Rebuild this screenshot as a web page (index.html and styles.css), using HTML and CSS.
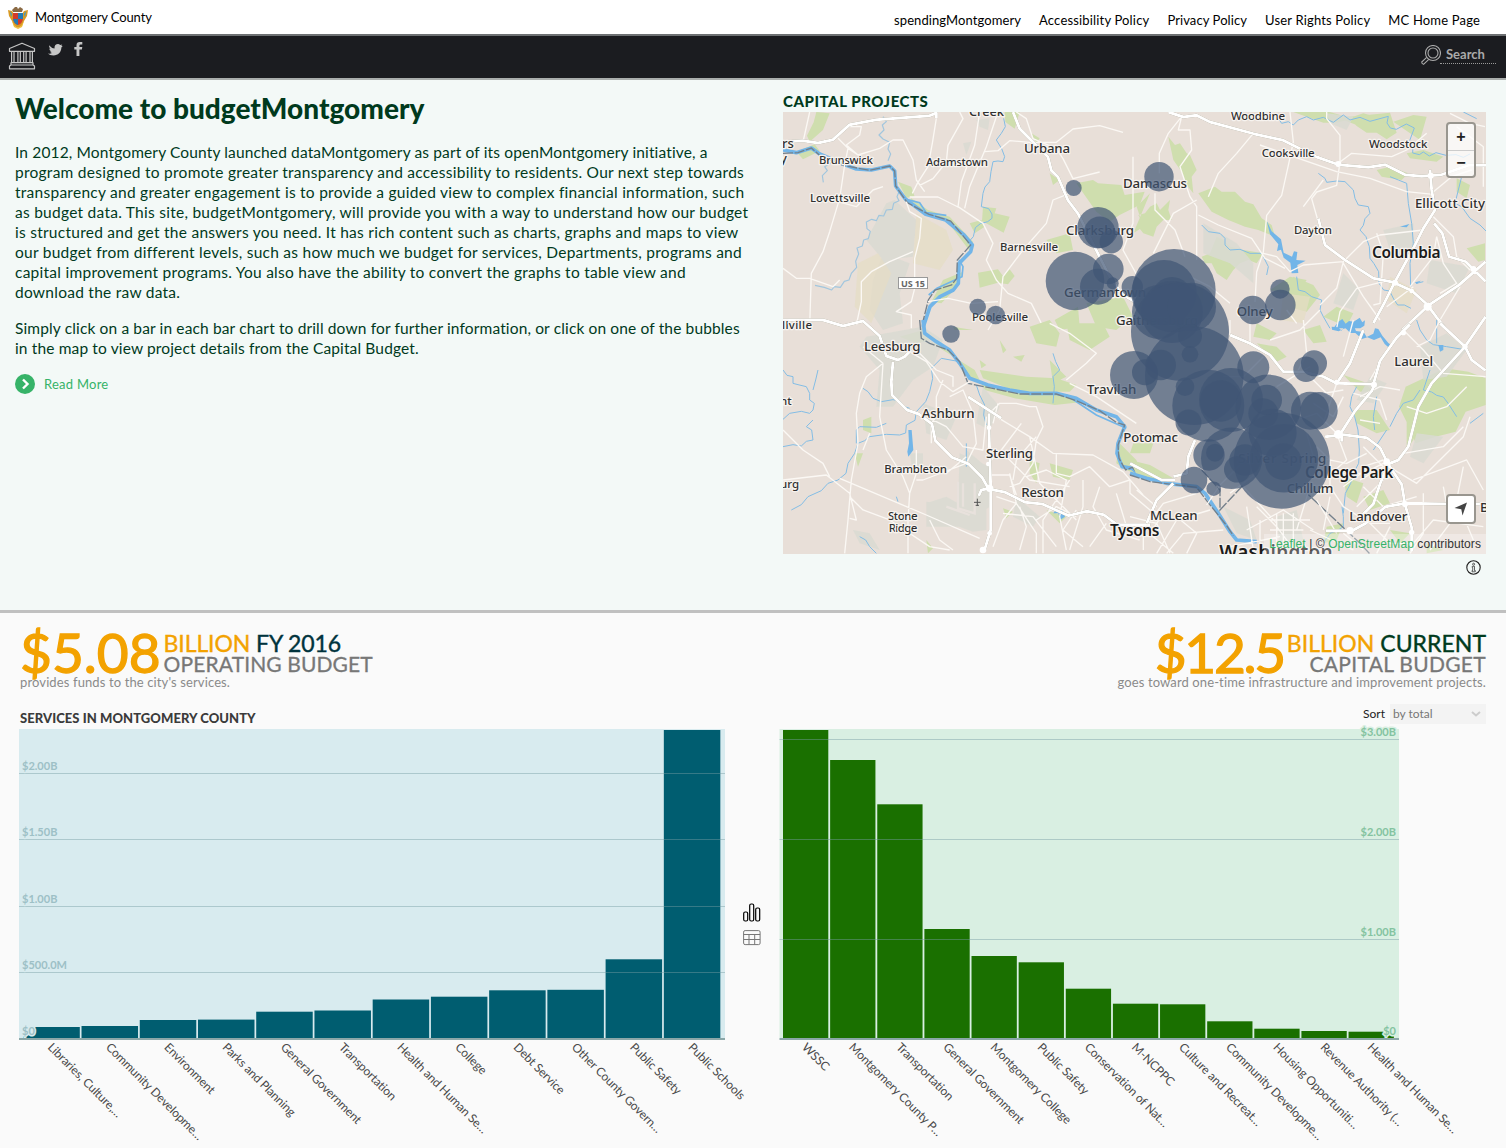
FILE: index.html
```html
<!DOCTYPE html>
<html lang="en">
<head>
<meta charset="utf-8">
<title>budgetMontgomery</title>
<link rel="stylesheet" href="styles.css">
</head>
<body>
<header class="topbar">
  <a class="brand">
    <svg class="crest" width="20" height="22" viewBox="0 0 20 22"><path d="M4 3L7 0h2l1 2 2-2 3 2-1 3H5z" fill="#8b6b45"/><path d="M0 3l4 1 2 3h8l2-3 4-1-1 6-3 5-2 5-4 2-4-2-2-5-3-5z" fill="#d99a24"/><path d="M2 4l2 3-1 3zM18 4l-2 3 1 3z" fill="#2f9ad4"/><path d="M5 6h10v6q-1 5-5 6-4-1-5-6z" fill="#d33b2c"/><path d="M10 6h5v6h-5zM5 12h5v6q-4-1-5-6z" fill="#237bb5"/><path d="M4 14l3 5 3 2 3-2 3-5-2 6-4 2-4-2z" fill="#f0bd38"/></svg>
    <span>Montgomery County</span>
  </a>
  <nav class="links"><a class="tight">spendingMontgomery</a><a>Accessibility Policy</a><a class="tight">Privacy Policy</a><a>User Rights Policy</a><a>MC Home Page</a></nav>
</header>
<div class="navbar">
  <div class="social">
    <svg class="hall" width="28" height="28" viewBox="0 0 28 28" fill="none" stroke="#c6c6c6" stroke-width="1.200" stroke-linejoin="round"><path d="M1.500 6.500L14 1.200l12.500 5.300v2.800h-25zM3.600 9.300v11.400M6 9.300v11.400M9.900 9.300v11.400M12.300 9.300v11.400M15.700 9.300v11.400M18.100 9.300v11.400M22 9.300v11.400M24.400 9.300v11.400M3 20.700h22v2.300H3zM3 23L1.500 24v2.800h25V24L25 23"/></svg>
    <svg class="bird" width="15" height="12" viewBox="0 0 15 12"><path d="M1 1.200Q3.500 4.200 6.500 4.400C6.200 1.500 8 0 10 0q1.300 0 2.100.9L14.200.6l-.9 1.200 1.400.1-1.300 1.700C13.200 8.500 10 11.500 5.500 11.500 3.100 11.500 1 10.800 0 9.500q2.300.5 4-.6Q2.700 8.700 2 7.400h1.400Q1.300 6.500 1.200 4.400l1.300.4Q.9 3.200 1 1.200z" fill="#c6c6c6"/></svg>
    <svg class="fb" width="9" height="14" viewBox="0 0 9 14"><path d="M2.500 14V7.600H.3V5h2.200V3.300Q2.500 0 5.700 0h2.600v2.500H6.600Q5.400 2.500 5.400 3.600V5h2.900l-.4 2.600H5.400V14z" fill="#c6c6c6"/></svg>
  </div>
  <div class="search">
    <svg width="20" height="20" viewBox="0 0 20 20" fill="none" stroke="#aaa" stroke-width="1.100"><circle cx="12" cy="8" r="7.500"/><circle cx="12" cy="8" r="5"/><path d="M5.700 12.300L.7 17q0 1.800 1.800 2.300L7.800 14.300"/></svg>
    <span>Search</span>
  </div>
</div>

<section class="hero">
  <div class="intro">
    <h1>Welcome to budgetMontgomery</h1>
    <p><span class="lead">In 2012, Montgomery County launched dataMontgomery as part of its openMontgomery initiative, a</span><br>program designed to promote greater transparency and accessibility to residents. Our next step towards<br>transparency and greater engagement is to provide a guided view to complex financial information, such<br>as budget data. This site, budgetMontgomery, will provide you with a way to understand how our budget<br>is structured and get the answers you need. It has rich content such as charts, graphs and maps to view<br>our budget from different levels, such as how much we budget for services, Departments, programs and<br>capital improvement programs. You also have the ability to convert the graphs to table view and<br>download the raw data.</p>
    <p class="lead">Simply click on a bar in each bar chart to drill down for further information, or click on one of the bubbles<br>in the map to view project details from the Capital Budget.</p>
    <a class="more"><svg width="20" height="20" viewBox="0 0 20 20"><circle cx="10" cy="10" r="10" fill="#36b368"/><path d="M8 5.500l4.500 4.500L8 14.500" fill="none" stroke="#fff" stroke-width="2.400"/></svg><span>Read More</span></a>
  </div>
  <div class="projects">
    <h2>CAPITAL PROJECTS</h2>
    <div class="map">
      <svg width="703" height="442" viewBox="0 0 703 442">
        <rect width="703" height="442" fill="#e8dfd8"/>
        <!-- north-west tile -->
        <g transform="translate(0 -22) scale(.33333)">
          <g class="park">
            <path d="M100 66l40 4-20 50-40 35-8-18 20-40zM40 185l55-22 15 20-50 25zM345 275l40 15 10 30-25 3zM385 325l50 35 65 20 70 75-8 30-65-85-60-30-60-30zM600 350l40 5-5 15 45 10-18 48-65-35zM560 400l35-10 10 20-30 20zM665 66l45 0-15 50-28-20zM800 250l30 20-20 15zM880 280l50-10 15 10 70 5 10 30 60-10-15 40-60 30-30 20-40-30zM790 450l70-20 10 50-50 10zM585 548l60-10 15 20 20-20 15 20-20 25-30-5-55 15zM480 570l60-25-20 50-45 45-30-5zM910 640l110-20 30 60-50 40-60-10zM815 690l70-40 5 60-60 10zM745 130l25 15-10 15zM510 710l60 10h-55z"/>
          </g>
          <g class="scrub"><path d="M580 90l40-5-5 35-25-10zM310 340l25-10 65 60-10 110-90 10-50-60zM300 490l80 30-30 90 10 90-60 20-40-60 10-90zM540 160l25-5-15 40z"/></g>
          <g class="farm"><path d="M400 370l90 50 20 60-40 60-80-20zM225 520l60-30 40 60-60 150-50-50z"/></g>
          <g class="stream"><path d="M300 80l10 15-12 10 5 15-15 15 12 12 20 10-5 20 8 15-8 20M150 215l-25 15 8 12-15 15 3 20M350 300l-8 20 6 12-16 8-4 18-18 2-8 18-14-2-8 16-14-4-16 8 2 20 10 8-6 22-14 4-4 18-16 6 5 18-9 22 3 18-16 18-7 20-14 4-12 18-18-2-8 10-22-8-28-6"/></g>
          <g class="brook"><path d="M662 85l5 25-12 20-15 20 16 26 9 24-5 15-15-2-15 2-6 30-4 30-14 16-6 19-5 40 22 6 10 16 0 13-13 10-22 6-15 12-6 27-18 20"/></g>
          <path class="river" d="M0 180l40 8 45-14 25 18 70 30 40 15 45 3 55-12 15 15 3 45 30 40 60 45 60 17 55 45 25 30-5 20-35 35-2 60-15 20-40 20-30 30-20 60 5 45"/>
          <path class="river2" d="M370 328l40 10 20 30 60 8M528 510l12 20-3 30-75 35-25 20"/>
          <path class="border" d="M0 190l45-2 40-14 25 22 70 30 80 15 60-13 15 15 3 45 35 50 65 35 65 20 60 72-40 45-2 55-15 20-50 15-20 30-15 60-8 45"/>
          <g class="minor"><path d="M80 66l-20 90M200 110l35 0-5 25-40 30 35 30 65-20 40-25 30 0 30 60 10 60 25 35M165 145l30 30-10 50-15 100-30 100-20 60-35 65-5 160M0 535l40 30 40 0 70 25 20-20M225 195l-30-20M460 85l-12 75-13 70-32 50-15 30M530 66l10 20-45 80-5 50-40 50-40 20M590 66l-15 100-40 110-10 75-60-30h-85M640 80l-30 90-50 120-15 65M525 350l75 50 30 60-20 50 30 60 35 40 70 30 30 60M370 335l10 30 35 20-5 60-15 60 0 90-10 40-45 30 45 10 0 40M300 290l-30 10-50 50-55-15M390 485l-70 30-55 30-30 30 0 60-15 70M605 185l40-3 35-30 60 5 80 0 50-40 80-10 70 20M700 66l30 20 20 60 70 30 20 30 30 60 80-20M860 310l-50 20-20 70-70 80-60 80-10 100-35 60M435 635l60-10 70 15 80-5M1050 200l0 200-30 80 50 90"/></g>
          <g class="major"><path d="M0 155l60-3 45 7 45-10 50-45 80-15 160-12 20-8 0 15"/><path d="M690 66l20 50 50 50 35 35 10 40 20 20 30 70 30 40 30 60 60 120 40 60 50 30"/></g>
        </g>
        <!-- north-east tile -->
        <g transform="translate(347 -22) scale(.33333)">
          <g class="park">
            <path d="M115 140l20 25 15-5 20 30 10 5 20 45-15 20 5 50-20-25-15-40-25-35zM205 310l50-20 20 15 40 0 30 30 25 8 25 42 30 20 10 35-50-20-40-10-50-20-50-25zM490 66h110l50 15 130-13 20 60-30 20-30-20-30 0-30-20-20-20-40 10-40 0zM790 95l60-20 40 5-20 70zM640 90l60-20 70 20 10 50-60-20zM740 240l40-10 55 20-20 20-60-10zM830 190l50-10 60 20-20 15-80-10zM60 310l-40 40 20 60-30 20M260 440l20 10 20 20 40 10 60 10-20 30-25-10-25 10-20 20-20 30-30-20-15-30-20 0-10-20 25-10zM490 560l60 25 20 30-40 50-40-10zM980 265l40 20-10 40-30-20zM1010 475l55-15v50l-20 5zM150 600l70-10 0 50-80 20zM420 600l60-40 50 10-30 50zM580 680l40-30 50 20-20 40zM60 350l20-10 10 20 30-30-5 30 10 30-25 0-20 20-10 30-30-10-20-25 15-10-10-20 20-5z"/>
          </g>
          <g class="scrub"><path d="M220 400l100 60 50 60 0 60-70-60-80-30zM640 550l50 50-20 60-60-20zM760 420l90-20 0 100-60 10zM900 510l120 20-40 80-90-30zM590 70l80 10-20 40-50-20z"/></g>
          <g class="farm"><path d="M460 610l80 10-20 80-70-10zM780 560l80 40-30 70-60-40z"/></g>
          <g class="brook"><path d="M215 405l20 20 35 5 15 15 0 20 15 15 30-2 30 12 35 0 10 20 10 20-5 25M500 560l5 40 20 5 20 15 30 10-5 30 10 20 20 35M445 85l10 15 20-5 15 10 15-15 25-10 20 10 30-8 30 15 30-22 20 15 30-8 30 12 55-15-4 20 10 15 18 4 30-16 24 12-14 38 10 15-1 22 20 5 12-8 18 12 20-10 30 8 30-2 22 8 20-10M565 250l20 15 5 12 30-4 25 2 25 25 5 25 10 20 30 5 5 20-15 16-5 20-10 14 18 20 10 30 2 35 12 16 14 24 1 35 14 20 18 3 12 24 12 18 20 0 20 10M780 260l25 10 25 10 5 60 10 60 5 60-10 60 2 70M995 260l-10 40-10 40 20 10 25 35 30 20 20 20M860 580l20-5M1000 66l40 20"/></g>
          <path class="lake" d="M410 392l15 32 28 24 8 40 25 12 6-16 10 2-3 24 28 2-25 13 3 24-20 1-4-32-20-15-8-24-12 4 4-20-25-30zM610 715l15-20 12-8 10 14 10-8 14 2 18-12 8 14 8-6-2 16-12 8zM810 410l28-8-8 10zM855 577l18-5-13 10z"/>
          <g class="minor"><path d="M155 80l-40 50-27 60 0 60M155 80l-10 40 35 0 5 60-35 50 30 90 20 30 0 40 0 120M370 130l-50 60-55 60-30 70M480 66l10 90-15 70-20 90-45 60-10 110-20 60-5 90M590 66l0 20 40 50 0 80-10 70-60 20-15 20 20 70M625 220l40-30 120 10 45-20 60-50M390 165l230 80 100 20 110 40 80 8M905 310l60-50 60-20M910 380l60 60 10 60 40 40M880 420l-130 15-50 20-60 60-20 80-50 50M400 490l40 10 40 45 40-20 120-10M205 375l60 30 100 40 40 60 60 30M75 310l0 50 60 60 30 80M740 430l20 60-10 150-20 5M840 590l70-90 10-60M920 440l20 80 40 60-50 30M760 575l-80 20-50 70-10 50M640 520l60 100 50 70M990 590l-60 100M1060 290l0-120-80-60M960 70l60 30 45 10M300 640l-60-50-60-30M520 350l60-80M850 590l-80 60M500 700l-30-40M200 330l-70 40-60 120"/></g>
          <g class="major"><path d="M115 66l45 15 40-5 40 20 130 35 90 20 100 50 65 23 90 8 50-8 60 30 50 5 60-5 80-28h55M900 240l5 60 10 60-35 55-30 60-55 100-30 60-35 65M565 385l20 80 60 45 85 55 60 12 55 25 45 40 30 40 30 38M1067 515l-80 70-90 60-80 75M1067 575l-60-60-50-15-20-70-25-30"/></g>
          <g class="joint"><circle cx="625" cy="222" r="9"/><circle cx="902" cy="257" r="9"/><circle cx="795" cy="578" r="9"/><circle cx="893" cy="650" r="12"/><circle cx="845" cy="603" r="7"/><circle cx="1030" cy="537" r="9"/></g>
        </g>
        <!-- south-west tile -->
        <g transform="translate(0 208) scale(.33333)">
          <g class="park">
            <path d="M440 65l60 20 45 80 80 40 100 15 120 5 60 20-90 10-120-20-90-25-30-60zM590 150l140 20 90 5 60 20-20 20-160 0-100-40zM690 110l35-5-10 20zM650 60l20 30-10 10zM740 20l60-20 30 40-10 40-60-10zM850 10l110 0 20 40-60 40-60-30zM240 300l25-10 0 50-25-10zM215 400l25 0-15 40zM1010 370l50 50 20 50-50-20-30-20 5-40zM740 420l30 10-10 60-20-30zM660 565l30 10-20 20zM800 430l70 20-10 30-50-10zM790 570l60 20-20 20zM800 120l50 50-40 20zM350 50l70-20 20 30-40 10zM590 120l20 15-15 10zM430 660l20 25-15 15z"/>
          </g>
          <g class="scrub"><path d="M420 20l60 40-30 80-60 40-60 80-50 0 10-110-60-70 20-30zM530 400l90 40 0 120-80 60-110 0 0-70 60-20 35 20zM550 390l60 50 0 190-40 5-140-50 0-40 90 10zM420 250l100 40-30 70-60-20zM600 200l50 60-30 70-40-20zM210 630l50 10 30 50-60-20zM380 400l40 0 0 60-30 0zM700 530l70 60-20 30-60-30z"/></g>
          <g class="brook"><path d="M530 125l-55-10-30 30 4 30-9 40-12 30-28 30-4 26-26 14-2 24-18 6-40-2-50 7-15 12-20 8-10 30-20 30-6 30-24 20-30 10-20 22-40 18-20 24-30 16M240 205l15 10 15 20 25 10 35-6 20 4 12 16 18 6M0 150l12 16 18 4 0 20 15 4 25 6 10 20 0 20 14 10-4 20-10 10-25-6-35 6-20 18M90 300l-20 20 16 10 4 30-20 4-15 14-25-4-30 6M580 195l10 30 15 30-3 30 8 30M550 370l0 70M810 250l4-50-4-30 20-20-12-25-8-25M90 210l8-30 7-30M310 310l-30 12-50-2-10 10 0 40M230 650l18 10 12 20 20 20M340 530l5 15"/></g>
          <path class="lake" d="M376 330l10 0 5 60-15 20-3-15 5-25zM818 570l20 0 8 20-15 10-5-20-15 0z"/>
          <path class="river" d="M420 0l5 40 35 25 40 25 30 40 30 45 55 20 65 15 60 10h80l60 15 60 35 60 20 25 30-20 50-3 30 15 40 30 5 35 30"/>
          <path class="river2" d="M850 225l90 60 90 40"/>
          <path class="border" d="M410 0l5 55 25 15 55 20 35 35 25 65 155 32h110l60 20 70 30 50 35 25 8-20 60 3 40 20 35 20-8 25 30"/>
          <g class="minor"><path d="M300 130l-50 40-20 50-10 60 5 90-20 110-10 120-10 100M300 130l-10 160 20 100 50 80 20 50-5 80 0 100M0 480l130-15 70 55 20 80-20-5M170 475l260 110 160 70M200 530l40 40 80 30 120 80 60 10M0 330l60 60 60 40 20 40M380 95l50 30 40 60 40 30 50-30M400 90l60 60 50 20 0 30M480 180l-20 50 0 60-15 20 0 60M430 290l60 30 50 60 60 10 10-100M500 230l40-20 30 70 10 90-30 60-130 50-20 0M620 280l30-30 50 0 40 10 20 0 20 60-20 40-10 70-40 60-30 10M715 310l-60 80-40 40M760 350l-60 70-10 60M640 290l100 60 70 50 120 5 90 50 60 70M740 350l30 140 110 110M680 460l20 90-40 50-30 80M820 400l0 60 40 10 60-30 60 60 60-20M730 470l60-20 60 30-20 110 20 100M860 480l-80 120 0 100M640 530l60 20 60 90 0 60M660 580l90 10 70 90M900 480l0 80-40 130M950 500l-20 60 40 70 100 30M1000 520l40 130M620 465l60 0 20 60M400 390l0 70-20 60M550 410l-60 50-60 0M850 180l60-50 30-30-80-60-60-30M860 190l80 40 120 80M970 610l-50 70M710 560l20 60-20 70M880 570l-40 60 60 50M760 600l60-40 60 30M660 400l80 80 120 20M645 250l-15 60M240 390l20-50M240 80l60 50M440 600l30 60 40 30"/></g>
          <path class="runway" d="M525 485v80l50 15v-90M540 490v70M490 560l70 25"/>
          <g class="major"><path d="M0 0h120l60 18 60-15 50 45 20 60 35 12 20-10 20-20M330 125l-5 60 2 40 45 45 35 12 40 30 10 50 50 50 50 20 40 40 20 35 50 10 60 30 50 5 80 35 55-13 50 10 40 30h100M618 280v50l5 170 0 100 0 30-20 65M555 230l100 65M620 505l-25 5-8 18"/></g>
          <g class="joint"><circle cx="620" cy="505" r="11"/><circle cx="618" cy="323" r="7"/><circle cx="616" cy="432" r="7"/><circle cx="600" cy="690" r="10"/><circle cx="620" cy="640" r="7"/></g>
          <path d="M583 536v22M573 547h20M578 556h10" stroke="#555" stroke-width="3"/>
        </g>
        <!-- south-east tile -->
        <g transform="translate(347 208) scale(.33333)">
          <g class="park">
            <path d="M945 145l70 10 52 20v80l-60 20-30 60-60 15-60 20-20-50-30-60 20-60zM0 420l60 15 70 40-50 10-60-20zM380 70l60 10 30 30-30 15zM520 30l50-15 20 50-40 5zM640 165l60 20 30 30-40 0zM670 270l70 0 40 60-40 10-60-30zM700 530l60-20 20 40-60 20zM590 620l50-10-20 50-40 10zM380 10l60 30-20 20-50-10zM640 470l60 20-20 60-30-20zM830 280l30 20-10 60-20 30zM10 370l60 0-10 30-60 0zM780 630l60 10-30 30zM890 670l50 20-50 10z"/>
          </g>
          <g class="scrub"><path d="M720 170l50 20-40 60-50-10zM870 80l80-40 60 50-60 80-70 10zM440 590l60-20 20 90-70 20zM860 340l80 10-60 80-40-20zM280 560l80 40 20 60-60-20z"/></g>
          <g class="brook"><path d="M860 0l10 30 20 30 20 14 40 6 60 10M900 150l-10 30-10 30 25 6 15 10 20 5 15 20 25 39M870 210l-20 30-30 10-20 30-20 40M680 200l-15 30-5 30 14 30 10 40 4 60-2 40-16 30-8 30-16 30-6 60M770 330l-40 60M1060 280l-40 30M580 670l20-30 25-10 15-10 0-30-4-30M740 230l-10 60 4 40M920 0l0 70"/></g>
          <path class="lake" d="M605 20l20 2 10 10 15-22 20 3 8 20 23 3 9 15 20-10 5-16 10 2 12 20 18 22 8 5-5 10-14-12-12-20-20 8-20-8-16 5-20-18-15 0-15-15-20 10-20-5zM925 75l15 0 0 15-10 5z"/>
          <path class="river" d="M0 460l50 15 60 15 90 10 25 20 40 60 35 55 20 25 60 5"/>
          <path class="border" d="M0 465l60 20 140 17 30 40 60 75 20 30M215 450l55 60 0 60 70-75M520 510l170 160 30 32"/>
          <g class="minor"><path d="M0 480l0 40 60 50 40 10-40 60M300 45l0-45M210 10l-60 60M360 0v70M420 60l90-30 60-60M400 110l-60 60-60 0M500 160l30-60-10-100M440 200l100-60M600 230l-60-60M620 340l-60-60-60 20M690 230l60-30 60 10M700 380l60 60-70 40M620 340l30 80-70 60M530 340l20 70 100 20 60-30M640 460l60 0 60-30 100 60 60-60 80-80 20-60M830 260l60 20 60-20 60-60M850 480l160-60 50 90M600 500l40 60 80 50 60 0M700 500l60 60 100-30M720 610l60 60 70 0 60-70 150 20M780 620l-40 80M880 520l0 120-40 60M940 500l20 110-60 80M1000 440l-20 100 50 120M440 580v120M460 580v120M490 580v120M420 600h120M420 630h100M380 560l60 60 60 80M340 500l100 110M350 630l110-60 90 60M540 500l-40 130M560 540l60 100M200 520l-100 30-60 80 0 60M240 570l-100 30-60 100M280 630l-120 10-50 60M0 640l70 10 60 50M0 590l80 20 40 90M20 510l60 50M140 590l60 50-30 60M230 555l40-60 60-60M300 520l80-60M620 190l-40 120M640 110l30-110M670 220l80 20 20 60M690 300l60 10M850 0l-60 60-70 120M820 30l60 60 60 70 127 10M930 0l-30 60-40 20M640 210l-60 10M540 630l130 60M600 530l-20 100M700 440l60-20M550 250l60 40 30-60M560 380l40 40 0 80M640 500l80-60M680 560l80-80M350 560l20 130M390 600l0 100M300 680l150-30M640 640l60 50M820 400l120-20 60-60"/></g>
          <g class="major"><path d="M300 45l60 25 60 35 40 50 60 0 60 15 40 20 110 3 20-70 50-70 40-40M930 10l75 70 20 40 42 32M1067-10l-62 90-100 110-40 70-30 120-30 40-30 12-25 60-20 60-40 40M735 193l-10 20-50 60-45 70 80 10 40 30 25 50 40 60 10 60 20 70 0 70M585 350l50-5 0 20M1067 552h-110l-130-2-60 10-60 50-40 22h-80M130 490l-50 50-30 70M135 480l-40 0-95-50M130 470l40-10 5-50 20-50M700 30l-40 100-40 60"/></g>
          <g class="joint"><circle cx="625" cy="343" r="13"/><circle cx="770" cy="425" r="10"/><circle cx="825" cy="552" r="9"/><circle cx="660" cy="632" r="11"/><circle cx="1005" cy="80" r="8"/><circle cx="620" cy="187" r="8"/><circle cx="732" cy="194" r="9"/><circle cx="845" cy="637" r="8"/><circle cx="820" cy="38" r="8"/></g>
        </g>
        <g class="labels">
          <text x="-1" y="36" font-size="13">rs</text><text x="-3" y="51" font-size="13">y</text>
          <text x="186" y="4" textLength="35" font-size="13">Creek</text>
          <text x="36" y="51.500" textLength="54">Brunswick</text><text x="143" y="54" textLength="62">Adamstown</text>
          <text class="md" x="241" y="40.700" textLength="46">Urbana</text><text x="27" y="90" textLength="60">Lovettsville</text>
          <text x="217" y="138.700" textLength="58">Barnesville</text><text class="md" x="283" y="122.700" textLength="68">Clarksburg</text>
          <text class="md" x="281" y="184.700" textLength="82">Germantown</text><text x="189" y="209" textLength="56">Poolesville</text>
          <text class="md" x="333" y="213" textLength="82">Gaithersburg</text><text x="-1" y="217" textLength="30">llville</text>
          <text class="md" x="340" y="75.700" textLength="64">Damascus</text><text x="448" y="8" textLength="54">Woodbine</text>
          <text x="478.700" y="45.300" textLength="53">Cooksville</text><text x="586" y="35.700" textLength="58.500">Woodstock</text>
          <text class="md" x="632" y="96.300" textLength="70">Ellicott City</text><text x="511" y="122" textLength="38">Dayton</text>
          <text class="lg" x="589" y="145.500" textLength="68.500">Columbia</text><text class="md" x="453.700" y="203.700" textLength="36">Olney</text>
          <text class="md" x="81" y="239.300" textLength="56.500">Leesburg</text><text class="md" x="138.700" y="306.300" textLength="53">Ashburn</text>
          <text class="md" x="203" y="345.700" textLength="47">Sterling</text><text x="101.300" y="360.700" textLength="62.700">Brambleton</text>
          <text class="md" x="238.300" y="385.300" textLength="42.500">Reston</text><text x="105" y="408.300" textLength="29.700">Stone</text>
          <text x="105.700" y="419.700" textLength="28.700">Ridge</text><text x="-3" y="293.300">nt</text><text x="-3" y="375.700">urg</text>
          <text class="md" x="304" y="282.300" textLength="49.300">Travilah</text><text class="md" x="340.300" y="329.700" textLength="54.700">Potomac</text>
          <text class="lg" x="327" y="424" textLength="49.300">Tysons</text><text class="md" x="367" y="408" textLength="47.700">McLean</text>
          <text class="lg capital" x="436.300" y="447" textLength="113.300">Washington</text>
          <text class="md" x="455.300" y="351.300" textLength="88">Silver Spring</text><text class="lg" x="522" y="366" textLength="88.300">College Park</text>
          <text class="md" x="503.700" y="380.500" textLength="46.700">Chillum</text><text class="md" x="566.300" y="409" textLength="58">Landover</text>
          <text class="md" x="611.300" y="254" textLength="38.700">Laurel</text><text class="md" x="697" y="400">B</text>
        </g>
        <rect x="115.500" y="165.500" width="29" height="11" fill="#fff" stroke="#999"/><text x="118" y="174.500" font-size="9" font-weight="700" fill="#666" textLength="24">US 15</text>
        <g class="bubbles" id="bubbles"></g>
      </svg>
      <div class="zoom"><span>+</span><span>−</span></div>
      <div class="locate"><svg width="14" height="14" viewBox="0 0 14 14"><path d="M13 .5L8.500 13.500 7.300 7.200.5 6z" fill="#444"/></svg></div>
      <div class="credit"><a>Leaflet</a> | © <a>OpenStreetMap</a> contributors</div>
    </div>
    <svg class="info" width="15" height="15" viewBox="0 0 15 15" fill="none" stroke="#222"><circle cx="7.500" cy="7.500" r="6.700" stroke-width="1.100"/><circle cx="7.600" cy="4.200" r="1" stroke-width=".7"/><path d="M6.200 6.300h2.300v4.200h.8v1.300H6v-1.300h.7v-3h-.5z" stroke-width=".7"/></svg>
  </div>
</section>

<section class="budget">
  <div class="totals">
    <div class="total">
      <div class="figure"><b>$5.08</b><div class="unit"><div class="u1"><em>BILLION</em> <i class="teal">FY 2016</i></div><div class="u2">OPERATING BUDGET</div></div></div>
      <div class="note">provides funds to the city's services.</div>
    </div>
    <div class="total right">
      <div class="figure"><b>$12.5</b><div class="unit"><div class="u1"><em>BILLION</em> <i class="green">CURRENT</i></div><div class="u2">CAPITAL BUDGET</div></div></div>
      <div class="note">goes toward one-time infrastructure and improvement projects.</div>
    </div>
  </div>
  <div class="controls"><h3>SERVICES IN MONTGOMERY COUNTY</h3><div class="sort"><span>Sort</span><div class="select"><span>by total</span><svg width="10" height="6" viewBox="0 0 10 6"><path d="M1 1l4 3.500L9 1" fill="none" stroke="#ccc" stroke-width="2"/></svg></div></div></div>
  <div class="charts">
    <svg class="chart" id="operating" width="760" height="419"></svg>
    <div class="toggle">
      <svg width="18" height="19" viewBox="0 0 18 19" fill="none" stroke="#000" stroke-width="1.200"><rect x=".7" y="9" width="4" height="9" rx="1.500"/><rect x="6.700" y="1" width="4" height="17" rx="1.500"/><rect x="12.700" y="5" width="4" height="13" rx="1.500"/></svg>
      <svg width="18" height="16" viewBox="0 0 18 16" fill="none" stroke="#777"><rect x=".6" y=".6" width="16.500" height="14" rx="1.500"/><path d="M.6 4.500h16.500M.6 9.500h16.500M6 4.500v10M11.700 4.500v10"/></svg>
    </div>
    <svg class="chart" id="capital" width="727" height="419"></svg>
  </div>
</section>
<script src="app.js"></script>
</body>
</html>
```
FILE: styles.css
```css
* { box-sizing: border-box; }
body { margin: 0; width: 1506px; height: 1148px; overflow: hidden; font-family: Lato, "Open Sans", sans-serif; font-variant-ligatures: none; color: #003a1d; background: #fafafa; white-space: nowrap; }
h1, h2, h3, p { margin: 0; }
svg { display: block; flex: none; }
.topbar { height: 36px; border-bottom: 2px solid #6d7072; background: #fff; color: #000; display: flex; justify-content: space-between; padding: 7px 26px 0 8px; font-size: 13px; }
.brand { display: flex; gap: 7px; line-height: 20px; letter-spacing: -.12px; }
.links { display: flex; gap: 18px; line-height: 26px; letter-spacing: .17px; }
.tight { letter-spacing: .09px; }
.navbar { height: 44px; background: #1b1c20; border-bottom: 2px solid #aaaeac; display: flex; justify-content: space-between; padding: 6px 10px 0 8px; }
.social { display: flex; }
.bird { margin: 2px 0 0 12px; }
.fb { margin: 0 0 0 11px; }
.search { display: flex; padding-top: 3px; }
.search span { width: 56px; height: 19px; border-bottom: 1px dotted #999; margin-left: -1px; padding-left: 6px; color: #aaa; font-weight: 700; font-size: 13px; line-height: 19px; }
.hero { height: 533px; background: #f3f9f7; border-bottom: 3px solid #c0c0c0; display: flex; justify-content: space-between; padding: 12px 20px 0 15px; }
h1 { font-size: 28px; line-height: 32px; font-weight: 900; margin-bottom: 18px; }
p { font-size: 15.500px; line-height: 20px; margin-bottom: 16px; letter-spacing: .26px; }
.lead { letter-spacing: .14px; }
.more { display: flex; gap: 9px; font-size: 13px; line-height: 20px; letter-spacing: .25px; color: #36b368; margin-top: 15px; }
.projects { width: 703px; display: flex; flex-direction: column; }
h2 { font-size: 15px; line-height: 18px; padding-bottom: 2px; font-weight: 900; letter-spacing: .55px; }
.map { position: relative; width: 703px; height: 442px; overflow: hidden; }
.park { fill: #cfdeae; }
.scrub { fill: #d9dbd2; opacity: .85; }
.farm { fill: #e5ddc4; opacity: .7; }
.stream, .brook { fill: none; stroke: #83bde5; stroke-width: 3; stroke-linejoin: round; }
.stream { stroke: #a1c6de; stroke-width: 3.500; }
.river { fill: none; stroke: #72b5e8; stroke-width: 11; stroke-linejoin: round; }
.river2 { fill: none; stroke: #72b5e8; stroke-width: 5; }
.border { fill: none; stroke: #74808b; stroke-width: 4; stroke-dasharray: 30 5; }
.lake { fill: #72b5e8; }
.minor { fill: none; stroke: #fbf8f4; stroke-width: 4; stroke-linejoin: round; }
.runway { fill: none; stroke: #e8e1dc; stroke-width: 7; }
.major { fill: none; stroke: #fff; stroke-width: 9; stroke-linejoin: round; filter: drop-shadow(0 0 2px #8b8771); }
.joint { fill: #fff; }
.labels { font: 500 11.500px "Noto Sans", "Open Sans", sans-serif; fill: #303030; stroke: #f7f3ef; stroke-width: 2.500px; paint-order: stroke; stroke-linejoin: round; }
.labels .md { font-size: 13.300px; }
.labels .lg { font-size: 15.500px; font-weight: 600; fill: #1c1c1c; }
.labels .capital { font-size: 19px; }
.map text { font-family: "Noto Sans", "Open Sans", sans-serif; }
.bubbles { fill: #405675; fill-opacity: .7; }
.zoom { position: absolute; left: 663px; top: 10px; width: 30px; height: 56px; border: 2px solid #99968f; border-radius: 4px; background: rgba(255,255,255,.75); color: #222; font: 700 16px/26px "Liberation Sans", sans-serif; text-align: center; }
.zoom span { display: block; height: 26px; }
.zoom span + span { border-top: 1px solid #ccc; line-height: 24px; }
.locate { position: absolute; left: 663px; top: 382px; width: 30px; height: 30px; border: 2px solid #99968f; border-radius: 4px; background: #fff; padding: 6px; }
.credit { position: absolute; right: 0; bottom: 0; height: 20px; padding: 0 5px; background: rgba(255,255,255,.3); color: #333; font: 12px/20px "Liberation Sans", sans-serif; letter-spacing: .08px; }
.credit a { color: #36b368; }
.info { margin: 6px 5px 0 auto; }
.totals { display: flex; justify-content: space-between; padding: 14px 20px 0; height: 91px; }
.figure { display: flex; height: 49px; }
.right { text-align: right; }
.right .figure { justify-content: flex-end; }
.figure b { font-weight: 400; font-size: 55px; line-height: 51px; color: #f3a200; -webkit-text-stroke: 1.300px #f3a200; }
.right b { letter-spacing: -2.300px; }
.figure em, .figure i { font-style: normal; }
.figure em { color: #f3a200; }
.teal { color: #00333d; }
.green { color: #003a1d; }
.unit { padding: 5px 0 0 3px; }
.u1 { font-size: 23px; line-height: 22px; letter-spacing: -.1px; -webkit-text-stroke: .4px; }
.right .u1 { letter-spacing: .03px; }
.u2 { font-size: 21px; line-height: 19px; letter-spacing: .12px; color: #777; -webkit-text-stroke: .3px; }
.right .u2 { letter-spacing: .3px; }
.note { font-size: 13px; line-height: 16px; letter-spacing: .12px; color: #8a8a8a; margin-top: -2px; }
.controls { height: 20px; display: flex; justify-content: space-between; padding: 0 20px; }
h3 { font-size: 13px; line-height: 29px; font-weight: 900; letter-spacing: .07px; color: #3b3b3b; }
.sort { display: flex; gap: 5px; font-size: 12px; line-height: 20px; color: #222; }
.select { width: 96px; background: #f3f3f3; color: #777; display: flex; justify-content: space-between; align-items: center; padding: 0 5px 0 3px; }
.charts { display: flex; height: 424px; }
.chart { margin-top: 5px; overflow: visible; }
.toggle { width: 19px; margin-left: -17px; margin-right: 17px; padding-top: 179px; display: flex; flex-direction: column; gap: 8px; }
.tick { font-size: 11px; font-weight: 700; paint-order: stroke; stroke-width: 3px; stroke-linejoin: round; }
.category { font-size: 12px; letter-spacing: -.1px; fill: #4a4a4a; }
```
FILE: app.js
```js
const NS = 'http://www.w3.org/2000/svg';
function add(parent, tag, attrs, text) {
  const el = document.createElementNS(NS, tag);
  for (const k in attrs) el.setAttribute(k, attrs[k]);
  if (text) el.textContent = text;
  parent.appendChild(el);
}

// Capital projects: x, y, radius
const projects = [
  [290.7,76,8],[315,115.7,20.7],[316.7,120.3,15.7],[328.3,129.7,11.7],[292,169,29.3],[325.3,157,15.3],[315,174.7,18],[329.7,171.3,6],[349.3,174.7,10.7],[194.7,195,8.3],[212.7,203,9.3],[168,222,8.7],
  [376,64.7,14.7],[391,178.7,41.7],[381,180.7,32.7],[389,185,20],[376,200,27],[389,200,31],[408.7,195,24.3],[497,177,9.7],[497.3,193,15.3],[469.7,198,14.3],
  [397,219.7,49],[411.3,263.7,49.3],[351,263,24],[362,260.3,13],[377.7,253,15.3],[407,224,12],[407,242.3,8.3],[470.3,255.3,16],[523,257.3,12.7],[531,251.3,13],
  [425.3,293.7,36],[448,288,32],[437.7,289,20.7],[402,274.7,9.3],[405.5,310.5,13],[485.3,295.3,32.7],[483.7,288,15.3],[480.3,301.3,15],[527,298.7,19],[536,298.7,18.7],
  [489.7,320.7,24],[498.7,348.7,48],[501,346.3,34.3],[426,343,15.7],[432,340.7,9],[448.7,346.3,30.7],[454.3,357.3,13.3],[462,348,15.7],[411,368,13.3],[430.7,376.7,7.3],[500.3,349.7,18.3]
];
for (const [cx, cy, r] of projects) add(document.getElementById('bubbles'), 'circle', { cx, cy, r });

function chart(id, o) {
  const s = document.getElementById(id);
  add(s, 'rect', { x: o.left, y: 0, width: o.right - o.left, height: 309, fill: o.bg });
  o.bars.forEach(([name, top], i) => {
    const x = o.first + i * o.pitch;
    add(s, 'rect', { x, y: top, width: o.width, height: 309 - top, fill: o.fill });
    add(s, 'text', { class: 'category', transform: `translate(${x + o.shift} 319) rotate(45)` }, name);
  });
  for (const [y, label] of o.ticks) {
    if (label !== '$0') add(s, 'rect', { x: o.left, y: y - .5, width: o.right - o.left, height: 1, fill: '#779da3', opacity: .45 });
    add(s, 'text', { class: 'tick', x: o.anchor === 'end' ? o.right - 3 : o.left + 3, y: y - 3.5, 'text-anchor': o.anchor, fill: o.ink, stroke: o.bg }, label);
  }
  add(s, 'rect', { x: o.left, y: 309, width: o.right - o.left, height: 2, fill: '#8ba7a8' });
}
chart('operating', {
  left: 19, right: 725, first: 23.3, pitch: 58.23, width: 56.5, shift: 23.7, bg: '#d8ebef', fill: '#005d70', ink: '#9dc0c6', anchor: 'start',
  ticks: [[44.5,'$2.00B'],[110.5,'$1.50B'],[177.5,'$1.00B'],[243.5,'$500.0M'],[309.5,'$0']],
  bars: [['Libraries, Culture,…',298],['Community Developme…',297],['Environment',291],['Parks and Planning',290.6],['General Government',282.7],['Transportation',281.5],['Health and Human Se…',270.5],['College',267.7],['Debt Service',261.3],['Other County Govern…',260.8],['Public Safety',230.3],['Public Schools',1]]
});
chart('capital', {
  left: 0.5, right: 620, first: 4, pitch: 47.13, width: 45.3, shift: 18.2, bg: '#d9efe2', fill: '#1a7000', ink: '#84c3a0', anchor: 'end',
  ticks: [[10.5,'$3.00B'],[110.5,'$2.00B'],[210.5,'$1.00B'],[309.5,'$0']],
  bars: [['WSSC',1],['Montgomery County P…',31],['Transportation',75.3],['General Government',200],['Montgomery College',227],['Public Safety',233.3],['Conservation of Nat…',259.7],['M-NCPPC',274.7],['Culture and Recreat…',275.3],['Community Developme…',292.3],['Housing Opportuniti…',299.7],['Revenue Authority (…',302],['Health and Human Se…',302.7]]
});
```
